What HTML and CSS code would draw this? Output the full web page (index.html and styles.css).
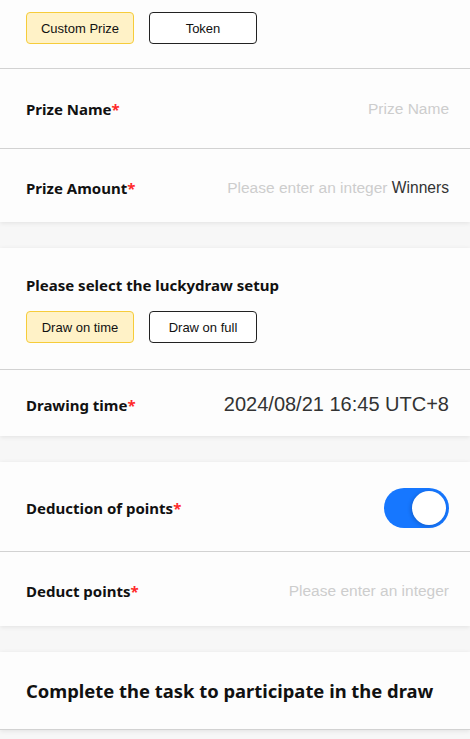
FILE: index.html
```html
<!DOCTYPE html>
<html lang="en">
<head>
    <meta charset="UTF-8">
    <meta name="viewport" content="width=device-width, initial-scale=1.0">
    <title>Create Lucky Draw</title>
    <link rel="stylesheet" href="styles.css">
</head>
<body>
    <div class="card">
        <div class="tabs">
            <button class="tab active">Custom Prize</button>
            <button class="tab">Token</button>
        </div>
        <div class="row row-name">
            <span class="label">Prize Name<i>*</i></span>
            <span class="placeholder">Prize Name</span>
        </div>
        <div class="row row-amount">
            <span class="label">Prize Amount<i>*</i></span>
            <span class="value"><span class="placeholder">Please enter an integer</span> Winners</span>
        </div>
    </div>

    <div class="card">
        <div class="setup">
            <div class="label">Please select the luckydraw setup</div>
            <div class="tabs-inline">
                <button class="tab active">Draw on time</button>
                <button class="tab">Draw on full</button>
            </div>
        </div>
        <div class="row row-time">
            <span class="label">Drawing time<i>*</i></span>
            <span class="time">2024/08/21 16:45 UTC+8</span>
        </div>
    </div>

    <div class="card">
        <div class="row row-switch">
            <span class="label">Deduction of points<i>*</i></span>
            <span class="switch on"><span class="knob"></span></span>
        </div>
        <div class="row row-deduct">
            <span class="label">Deduct points<i>*</i></span>
            <span class="placeholder">Please enter an integer</span>
        </div>
    </div>

    <div class="card">
        <div class="task-title">Complete the task to participate in the draw</div>
    </div>
</body>
</html>
```

FILE: styles.css
```css
body {
    margin: 0;
    background-color: #f7f7f7;
    font-family: "Liberation Sans", Arial, sans-serif;
    color: #111;
}

.card {
    background-color: #fdfdfd;
    box-shadow: 0 1px 5px rgba(0, 0, 0, 0.09);
    margin-bottom: 26px;
}

.tabs {
    display: flex;
    gap: 15px;
    padding: 12px 21px 24px 26px;
    border-bottom: 1px solid #d2d2d2;
}

.tabs-inline {
    display: flex;
    gap: 15px;
    margin-top: 16px;
}

.tab {
    width: 108px;
    height: 32px;
    font-family: "Liberation Sans", Arial, sans-serif;
    font-size: 13px;
    color: #111;
    background-color: #fff;
    border: 1px solid #222;
    border-radius: 4px;
    padding: 0;
}

.tab.active {
    background-color: #fff2c7;
    border-color: #f6cc3a;
}

.row {
    display: flex;
    align-items: center;
    justify-content: space-between;
    padding: 0 21px 0 26px;
    box-sizing: border-box;
}

.row + .row {
    border-top: 1px solid #d2d2d2;
}

.row-name { height: 79px; }
.row-amount { height: 74px; padding-top: 4px; }
.row-time { height: 67px; padding-top: 3px; border-top: 1px solid #d2d2d2; }
.row-switch { height: 89px; padding-top: 2px; }
.row-deduct { height: 75px; padding-top: 4px; }

.label {
    font-family: "Noto Sans", sans-serif;
    font-weight: 700;
    font-size: 15px;
    color: #111;
}

.label i {
    font-style: normal;
    color: #ff2a2a;
}

.placeholder {
    font-size: 15.5px;
    color: #cdcdcd;
}

.value {
    font-size: 15.6px;
    color: #333;
}

.time {
    font-size: 20px;
    color: #333;
}

.setup {
    padding: 27px 21px 26px 26px;
}

.switch {
    width: 65px;
    height: 40px;
    border-radius: 20px;
    background-color: #1677ff;
    display: flex;
    align-items: center;
    justify-content: flex-end;
    padding: 0 3px;
    box-sizing: border-box;
}

.knob {
    width: 34px;
    height: 34px;
    border-radius: 50%;
    background-color: #fff;
    box-shadow: -1px 1px 4px rgba(0, 0, 0, 0.2);
}

.task-title {
    font-family: "Noto Sans", sans-serif;
    font-weight: 700;
    font-size: 18.4px;
    padding: 0 21px 0 26px;
    height: 77px;
    display: flex;
    align-items: center;
    border-bottom: 1px solid #d2d2d2;
}
```
